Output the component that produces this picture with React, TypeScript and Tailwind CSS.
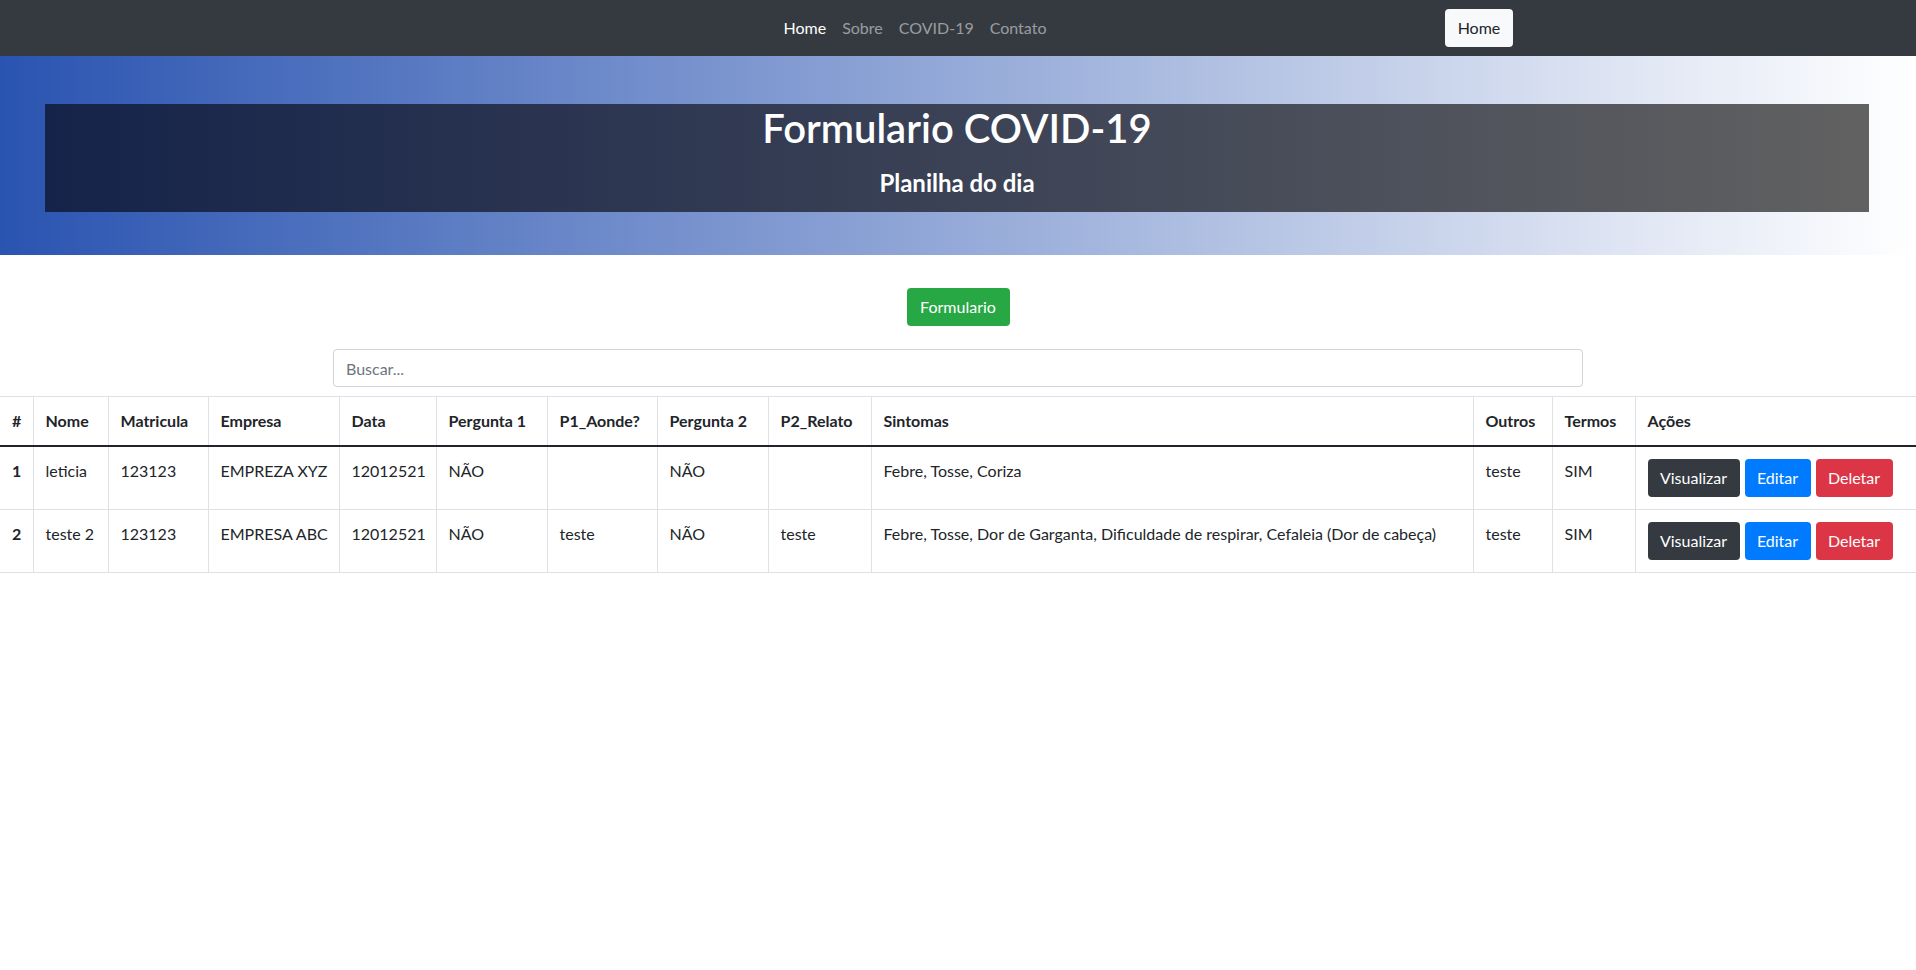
import React from "react";

const cols = [33, 75, 100, 131, 97, 111, 110, 111, 103, 602, 79, 83, 281];

const headers = [
  "#",
  "Nome",
  "Matricula",
  "Empresa",
  "Data",
  "Pergunta 1",
  "P1_Aonde?",
  "Pergunta 2",
  "P2_Relato",
  "Sintomas",
  "Outros",
  "Termos",
  "Ações",
];

const rows = [
  {
    id: 1,
    nome: "leticia",
    matricula: "123123",
    empresa: "EMPREZA XYZ",
    data: "12012521",
    p1: "NÃO",
    p1Aonde: "",
    p2: "NÃO",
    p2Relato: "",
    sintomas: "Febre, Tosse, Coriza",
    outros: "teste",
    termos: "SIM",
  },
  {
    id: 2,
    nome: "teste 2",
    matricula: "123123",
    empresa: "EMPRESA ABC",
    data: "12012521",
    p1: "NÃO",
    p1Aonde: "teste",
    p2: "NÃO",
    p2Relato: "teste",
    sintomas:
      "Febre, Tosse, Dor de Garganta, Dificuldade de respirar, Cefaleia (Dor de cabeça)",
    outros: "teste",
    termos: "SIM",
  },
];

function Cell({ first, children }: { first?: boolean; children?: React.ReactNode }) {
  return (
    <td
      className={
        "whitespace-nowrap border-b border-[#dee2e6] p-3 align-top " +
        (first ? "font-bold" : "border-l")
      }
    >
      {children}
    </td>
  );
}

export default function App() {
  return (
    <div className="min-h-screen bg-white font-['Lato','Open_Sans',sans-serif] text-base leading-6 text-[#212529]">
      <nav className="h-14 bg-[#343a40]">
        <div className="mx-auto flex h-full w-[1140px] items-center px-[15px]">
          <ul className="mx-auto flex pr-[18px]">
            <li>
              <a className="block px-2 py-2 text-white">Home</a>
            </li>
            <li>
              <a className="block px-2 py-2 text-white/50">Sobre</a>
            </li>
            <li>
              <a className="block px-2 py-2 text-white/50">COVID-19</a>
            </li>
            <li>
              <a className="block px-2 py-2 text-white/50">Contato</a>
            </li>
          </ul>
          <button className="h-[38px] w-[68px] rounded bg-[#f8f9fa] text-[#212529]">Home</button>
        </div>
      </nav>

      <header className="bg-[linear-gradient(to_right,#2a54b1,#ffffff)] pb-[43px] pl-[45px] pr-[47px] pt-12">
        <div className="h-[108px] bg-[linear-gradient(to_right,#15234a,#616161)] text-center text-white">
          <h1 className="text-[40px] font-semibold leading-[48px]">Formulario COVID-19</h1>
          <h4 className="mt-4 text-2xl font-bold leading-[29px]">Planilha do dia</h4>
        </div>
      </header>

      <main>
        <div className="mt-[33px] flex justify-center">
          <button className="h-[38px] w-[103px] rounded bg-[#28a745] text-white">Formulario</button>
        </div>
        <div className="mt-[23px] flex justify-center">
          <input
            className="h-[38px] w-[1250px] rounded border border-[#ced4da] px-3 text-[#495057] outline-none placeholder:text-[#6c757d]"
            placeholder="Buscar..."
          />
        </div>

        <table className="mt-[9px] w-full table-fixed border-collapse text-left">
          <colgroup>
            {cols.map((w, i) => (
              <col key={i} style={{ width: w }} />
            ))}
          </colgroup>
          <thead>
            <tr>
              {headers.map((h, i) => (
                <th
                  key={h}
                  className={
                    "whitespace-nowrap border-b-2 border-t border-b-[#212529] border-t-[#dee2e6] p-3 align-bottom font-bold " +
                    (i > 0 ? "border-l border-l-[#dee2e6]" : "")
                  }
                >
                  {h}
                </th>
              ))}
            </tr>
          </thead>
          <tbody>
            {rows.map((r) => (
              <tr key={r.id}>
                <Cell first>{r.id}</Cell>
                <Cell>{r.nome}</Cell>
                <Cell>{r.matricula}</Cell>
                <Cell>{r.empresa}</Cell>
                <Cell>{r.data}</Cell>
                <Cell>{r.p1}</Cell>
                <Cell>{r.p1Aonde}</Cell>
                <Cell>{r.p2}</Cell>
                <Cell>{r.p2Relato}</Cell>
                <Cell>{r.sintomas}</Cell>
                <Cell>{r.outros}</Cell>
                <Cell>{r.termos}</Cell>
                <Cell>
                  <div className="flex gap-[5px]">
                    <button className="h-[38px] w-[92px] rounded bg-[#343a40] text-white">Visualizar</button>
                    <button className="h-[38px] w-[66px] rounded bg-[#007bff] text-white">Editar</button>
                    <button className="h-[38px] w-[77px] rounded bg-[#dc3545] text-white">Deletar</button>
                  </div>
                </Cell>
              </tr>
            ))}
          </tbody>
        </table>
      </main>
    </div>
  );
}
